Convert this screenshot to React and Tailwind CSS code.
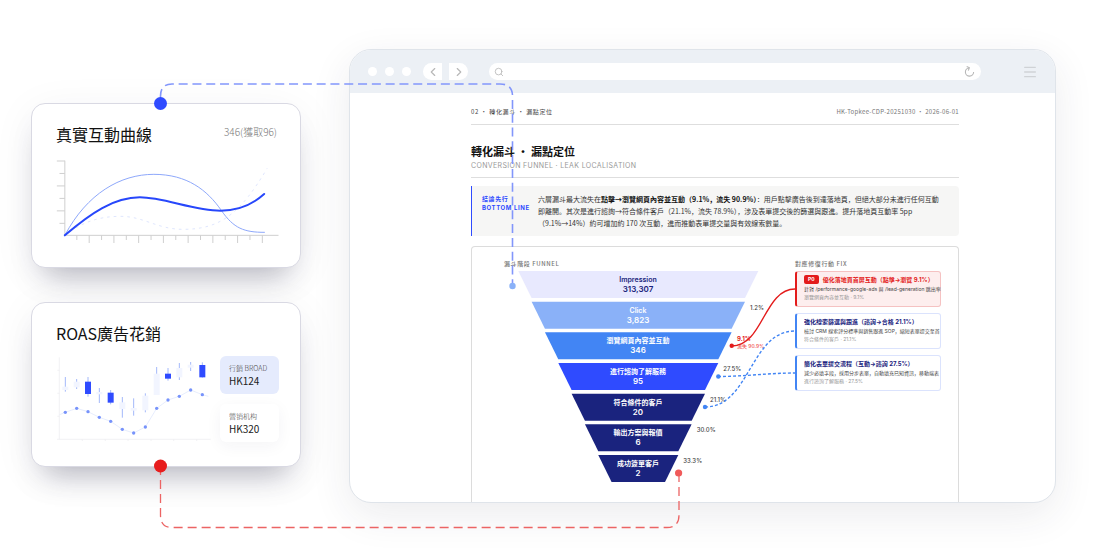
import React from 'react';
import { ChevronLeft, ChevronRight, Search, Menu } from 'lucide-react';

const candles = [
  { x: 136, wick: [261, 305], body: [290, 300], dot: 367 },
  { x: 170, wick: [267, 297], body: [275, 292], dot: 355 },
  { x: 204, wick: [261, 320], body: [275, 312], dot: 365, solid: true },
  { x: 238, wick: [294, 339], body: [306, 313], dot: 382 },
  { x: 272, wick: [300, 343], body: [308, 338], dot: 394, solid: true },
  { x: 307, wick: [321, 383], body: [337, 357], dot: 418 },
  { x: 341, wick: [325, 377], body: [354, 362], dot: 429 },
  { x: 376, wick: [310, 367], body: [317, 361], dot: 411 },
  { x: 410, wick: [231, 315], body: [251, 315], dot: 355 },
  { x: 444, wick: [234, 272], body: [251, 266], dot: 330, solid: true },
  { x: 478, wick: [219, 270], body: [234, 262], dot: 319 },
  { x: 512, wick: [216, 243], body: [224, 233], dot: 300 },
  { x: 547, wick: [217, 263], body: [225, 262], dot: 314, solid: true },
];

const tiers = [
  { label: 'Impression', value: '313,307', fill: '#e8e9fe', text: '#1a1f7c' },
  { label: 'Click', value: '3,823', fill: '#8ab1f8', text: '#ffffff', rate: '1.2%' },
  { label: '瀏覽網頁內容並互動', value: '346', fill: '#4285f4', text: '#ffffff' },
  { label: '進行諮詢了解服務', value: '95', fill: '#2f4bff', text: '#ffffff', rate: '27.5%' },
  { label: '符合條件的客戶', value: '20', fill: '#1a237e', text: '#ffffff', rate: '21.1%' },
  { label: '輸出方案與報價', value: '6', fill: '#1a237e', text: '#ffffff', rate: '30.0%' },
  { label: '成功簽單客戶', value: '2', fill: '#1a237e', text: '#ffffff', rate: '33.3%' },
];

const fixes = [
  {
    badge: 'P0',
    title: '優化落地頁首屏互動（點擊→瀏覽 9.1%）',
    desc: '針對 /performance-google-ads 與 /lead-generation 跳出率',
    meta: '瀏覽網頁內容並互動 · 9.1%',
  },
  {
    title: '強化線索篩選與跟進（諮詢→合格 21.1%）',
    desc: '檢討 CRM 線索評分標準與銷售跟進 SOP，縮短表單提交至首',
    meta: '符合條件的客戶 · 21.1%',
  },
  {
    title: '簡化表單提交流程（互動→諮詢 27.5%）',
    desc: '減少必填字段，採用分步表單，自動填充已知資訊，移動端表',
    meta: '進行諮詢了解服務 · 27.5%',
  },
];

const cardClass =
  'rounded-[14px] border border-[#d9d9e3] bg-white pl-6 pr-[21px] pt-[18px] h-[165px] shadow-[0_20px_28px_-14px_rgba(40,40,70,0.34),0_8px_44px_rgba(40,40,70,0.06)]';

function CurveCard() {
  const xTicks = Array.from({ length: 16 }, (_, i) => i);
  const yTicks = Array.from({ length: 6 }, (_, i) => i);
  return (
    <section className={cardClass}>
      <div className="flex items-start justify-between">
        <h2 className="text-[16px] leading-6 text-[#111]">真實互動曲線</h2>
        <span className="pr-0.5 text-[10px] leading-5 font-light text-[#777]">346(獲取96)</span>
      </div>
      <svg viewBox="108 207 666 261" className="mt-[13px] block h-[87px] w-full" fill="none">
        <g stroke="#cfcfcf" strokeWidth="3">
          <path d="M133 212V436H774" />
          {yTicks.map((i) => (
            <path key={i} d={`M${i % 2 ? 117 : 109} ${213 + i * 37.4}H133`} />
          ))}
          {xTicks.map((i) => (
            <path key={i} d={`M${169 + i * 37.1} 436V${i % 2 ? 459 : 450}`} />
          ))}
        </g>
        <path d="M133 436C180 400 230 379 300 379C370 379 410 418 488 418C600 418 660 370 740 235" stroke="#d9e1fd" strokeWidth="2.5" strokeDasharray="8 12" />
        <path d="M133 436C200 310 300 253 400 253C500 253 560 300 603 362C640 415 670 427 733 427" stroke="#8ea8fb" strokeWidth="3" />
        <path d="M133 436C210 370 280 322 358 322C430 322 520 362 600 362C660 362 700 340 731 312" stroke="#2747fb" strokeWidth="6" strokeLinecap="round" />
      </svg>
    </section>
  );
}

function SpendCard() {
  return (
    <section className={cardClass}>
      <h2 className="text-[16px] leading-6 text-[#111]">ROAS廣告花銷</h2>
      <div className="mt-[11px] flex justify-between">
        <svg viewBox="108 198 468 258" className="block h-[86px] w-[156px]" fill="none">
          <path d="M118 202V448M111 448H572M112 241H118M112 310H118M112 379H118M187 448V453M256 448V453M324 448V453M393 448V453M461 448V453M530 448V453" stroke="#ececef" strokeWidth="2" />
          <polyline points={`119,374 ${candles.map((c) => `${c.x},${c.dot}`).join(' ')} 565,319`} stroke="#e2e9fd" strokeWidth="2.5" />
          {candles.map((c) => (
            <g key={c.x}>
              <path d={`M${c.x} ${c.wick[0]}V${c.wick[1]}`} stroke="#a3b8fa" strokeWidth="3" />
              <rect x={c.x - 9} y={c.body[0]} width="18" height={c.body[1] - c.body[0]} fill={c.solid ? '#2f4bff' : '#f2f5ff'} />
              <circle cx={c.x} cy={c.dot} r="5" fill="#7793fb" />
            </g>
          ))}
        </svg>
        <div className="flex w-[59px] flex-col gap-[10px]">
          <div className="h-[38px] rounded-md bg-[#e5ebfd] px-[9px] pt-[7px]">
            <p className="text-[7px] leading-[10px] font-light text-[#444]">行銷 BROAD</p>
            <p className="text-[10px] leading-4 text-[#222]">HK124</p>
          </div>
          <div className="h-[38px] rounded-md bg-white px-[9px] pt-[7px] shadow-[0_4px_16px_rgba(40,40,70,0.05)]">
            <p className="text-[7px] leading-[10px] font-light text-[#444]">營销机构</p>
            <p className="text-[10px] leading-4 text-[#222]">HK320</p>
          </div>
        </div>
      </div>
    </section>
  );
}

function BrowserBar() {
  return (
    <div className="flex h-[43px] items-center bg-[#ecf0f5] pr-[17px] pl-[18px]">
      <div className="flex gap-2">
        <span className="size-[9px] rounded-full bg-white" />
        <span className="size-[9px] rounded-full bg-white" />
        <span className="size-[9px] rounded-full bg-white" />
      </div>
      <div className="ml-3 flex gap-[7px] text-[#b8b8b8]">
        <button aria-label="Back" className="flex h-[17px] w-[19px] items-center justify-center rounded-l-full bg-white">
          <ChevronLeft className="size-[14px]" />
        </button>
        <button aria-label="Forward" className="flex h-[17px] w-[19px] items-center justify-center rounded-r-full bg-white">
          <ChevronRight className="size-[14px]" />
        </button>
      </div>
      <div className="ml-[21px] flex h-[17px] flex-1 items-center rounded-full bg-white px-[5px] text-[#b8b8b8]">
        <Search className="size-[10px]" />
        <input aria-label="Address" className="h-full min-w-0 flex-1 bg-transparent px-1 text-[8px] outline-none" />
        <button aria-label="Reload">
          <svg viewBox="0 0 12 12" className="block size-[13px]" fill="none" stroke="currentColor" strokeWidth="1">
            <path d="M9.800 6.500A3.800 3.800 0 1 1 5.600 2.700M3.400 1.400L5.900 2.600L4.900 5.200" />
          </svg>
        </button>
      </div>
      <button aria-label="Menu" className="ml-[41px] text-[#cfd2d6]">
        <Menu className="size-4" />
      </button>
    </div>
  );
}

function Funnel() {
  return (
    <svg viewBox="0 0 291 215" className="block h-[215px] w-[291px] shrink-0" fontFamily="Inter, 'Noto Sans CJK SC', sans-serif">
      {tiers.map((t, i) => {
        const inset = 14.3 + i * 13.33;
        const top = 1 + i * 30.67;
        const right = 268.6 - inset;
        return (
          <g key={t.label}>
            <polygon points={`${inset},${top} ${right},${top} ${right - 13.3},${top + 27} ${inset + 13.3},${top + 27}`} fill={t.fill} />
            <text x="134" y={top + 11} textAnchor="middle" fontSize="7" fontWeight="600" fill={t.text}>{t.label}</text>
            <text x="134" y={top + 21} textAnchor="middle" fontSize="8" fontWeight="600" fill={t.text}>{t.value}</text>
            {t.rate && (
              <text x={right + 5} y={top + 8} fontSize="6" fontWeight="500" fill="#444">{t.rate}</text>
            )}
          </g>
        );
      })}
      <text x="233" y="71" fontSize="6" fontWeight="700" fill="#e31b1b">9.1%</text>
      <text x="233" y="78" fontSize="5" fontWeight="500" fill="#f05252">流失 90.9%</text>
      <g fill="none" strokeWidth="1.4">
        <path d="M228 76C259 76 260 19 291 19" stroke="#e31b1b" />
        <path d="M214 106.5C240 106.5 265 103 291 103" stroke="#4285f4" strokeDasharray="3 2" />
        <path d="M201 137C246 137 246 61 291 61" stroke="#4285f4" strokeDasharray="3 2" />
      </g>
      <circle cx="227.700" cy="75.800" r="2.200" fill="#e31b1b" />
      <circle cx="214.300" cy="106.500" r="2.200" fill="#4285f4" />
      <circle cx="201" cy="137" r="2.200" fill="#4285f4" />
    </svg>
  );
}

function FixCard({ fix }) {
  const urgent = Boolean(fix.badge);
  return (
    <li
      className={`h-9 rounded-[3px] border border-l-2 pt-[3px] pl-[7px] font-[Inter,'Noto_Sans_CJK_SC',sans-serif] ${urgent
        ? 'border-[#f5c2c2] border-l-[#e31b1b] bg-[#fdeeee]'
        : 'border-[#dbe3fd] border-l-[#4285f4] bg-white'
      }`}
    >
      {/* long descriptions run a little past the card edge before they are cut */}
      <div className="-mr-[9px] overflow-hidden whitespace-nowrap">
        <h4 className={`flex h-[9px] items-center gap-1 text-[6px] leading-[9px] font-bold ${urgent ? 'text-[#e31b1b]' : 'text-[#1a237e]'}`}>
          {urgent && <span className="rounded-[2px] bg-[#e31b1b] px-1 text-[5px] leading-[9px] text-white">{fix.badge}</span>}
          {fix.title}
        </h4>
        <p className="text-[5px] leading-[10px] text-[#444]">{fix.desc}</p>
        <p className="text-[5px] leading-[6px] text-[#999]">{fix.meta}</p>
      </div>
    </li>
  );
}

function Report() {
  return (
    <div className="pt-3 pr-24 pl-[121px]">
      <div className="flex justify-between border-b border-[#dedede] pb-[5px] text-[6px] leading-[14px]">
        <span className="tracking-widest text-[#444]">02 ・ 轉化漏斗 ・ 漏點定位</span>
        <span className="tracking-wider text-[#777]">HK-Topkee-CDP-20251030 ・ 2026-06-01</span>
      </div>
      <div className="border-b border-[#dedede] pt-[18px] pb-[6px]">
        <h1 className="text-[11px] leading-4 font-bold text-[#111]">轉化漏斗 ・ 漏點定位</h1>
        <p className="pt-[2px] font-[Inter] text-[7px] leading-[10px] tracking-wider text-[#999]">CONVERSION FUNNEL · LEAK LOCALISATION</p>
      </div>
      <div className="mt-2 flex rounded-r border-l border-[#2f4bff] bg-[#f6f6f5] pt-[7px] pr-4 pb-[7px] pl-[10px]">
        <p className="w-14 shrink-0 pt-[1px] font-[Inter,'Noto_Sans_CJK_SC',sans-serif] text-[6px] leading-[9px] font-bold tracking-widest text-[#2f4bff]">
          結論先行<br />BOTTOM LINE
        </p>
        <p className="text-[7px] leading-[12px] text-[#333]">
          六層漏斗最大流失在<b className="text-[#111]">點擊→瀏覽網頁內容並互動（9.1%，流失 90.9%）</b>：用戶點擊廣告後到達落地頁，但絕大部分未進行任何互動即離開。其次是進行諮詢→符合條件客戶（21.1%，流失 78.9%），涉及表單提交後的篩選與跟進。提升落地頁互動率 5pp（9.1%→14%）約可增加約 170 次互動，進而推動表單提交量與有效線索數量。
        </p>
      </div>
      <div className="mt-[10px] flex rounded-t border border-b-0 border-[#dcdcdc] pt-[11px] pr-[17px] pb-[17px] pl-8">
        <div className="shrink-0">
          <h3 className="text-[6px] leading-[12px] font-medium tracking-widest text-[#777]">漏斗階段 FUNNEL</h3>
          <Funnel />
        </div>
        <div className="min-w-0 flex-1">
          <h3 className="text-[6px] leading-[12px] font-medium tracking-widest text-[#777]">對應修復行動 FIX</h3>
          <ul className="flex flex-col gap-[6px] pt-[1px]">
            {fixes.map((f) => <FixCard key={f.title} fix={f} />)}
          </ul>
        </div>
      </div>
    </div>
  );
}

export default function App() {
  return (
    <div className="relative min-h-screen overflow-hidden bg-white font-['Noto_Sans_CJK_SC',sans-serif]">
      <main className="flex items-start gap-12 pt-[49px] pr-11 pl-[31px]">
        <div className="flex w-[270px] shrink-0 flex-col gap-[34px] pt-[54px]">
          <CurveCard />
          <SpendCard />
        </div>
        <div className="min-w-0 flex-1 overflow-hidden rounded-[22px] border border-[#dfe4ea] bg-white shadow-[0_12px_40px_rgba(40,40,70,0.09)]">
          <BrowserBar />
          <Report />
        </div>
      </main>

      {/* Dashed links between the cards and the report */}
      <svg viewBox="0 0 1100 550" className="pointer-events-none absolute top-0 left-0 h-[550px] w-[1100px]" fill="none">
        <path d="M160.500 98V96Q160.500 84 172 84H500Q512.500 84 512.500 96V286" stroke="#8296fb" strokeWidth="1.6" strokeDasharray="9 4.800" />
        <path d="M160.500 466V515Q160.500 527.500 172 527.500H667Q679 527.500 679 515V474" stroke="#ec6464" strokeWidth="1.3" strokeDasharray="9 5" />
        <circle cx="160.500" cy="103.500" r="6.500" fill="#2f4bff" />
        <circle cx="512.500" cy="286" r="3.200" fill="#8ab1f8" />
        <circle cx="160.500" cy="466" r="6.500" fill="#e71d1d" />
        <circle cx="678.600" cy="473" r="3.600" fill="#f05a5a" />
      </svg>
    </div>
  );
}
